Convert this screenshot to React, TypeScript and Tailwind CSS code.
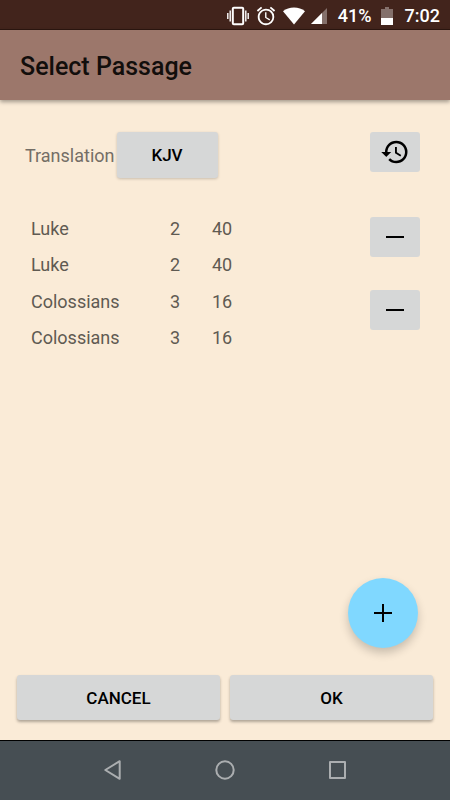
import React, { useState } from 'react';
import { MdAccessAlarm, MdHistory } from 'react-icons/md';

interface Verse {
  book: string;
  chapter: number;
  verse: number;
}

interface Passage {
  id: number;
  from: Verse;
  to: Verse;
}

const initialPassages: Passage[] = [
  { id: 1, from: { book: 'Luke', chapter: 2, verse: 40 }, to: { book: 'Luke', chapter: 2, verse: 40 } },
  { id: 2, from: { book: 'Colossians', chapter: 3, verse: 16 }, to: { book: 'Colossians', chapter: 3, verse: 16 } },
];

function PlusIcon() {
  return (
    <svg width="30" height="30" viewBox="0 0 30 30" fill="none" stroke="currentColor" strokeWidth="2">
      <path d="M6 15h18M15 6v18" />
    </svg>
  );
}

function MinusIcon() {
  return (
    <svg width="30" height="30" viewBox="0 0 30 30" fill="none" stroke="currentColor" strokeWidth="2">
      <path d="M6 15h18" />
    </svg>
  );
}

function StatusBar() {
  return (
    <div className="flex h-[30px] items-center justify-end border-b border-[#2c1610] bg-[#42241c] pt-0.5 pr-[10px] text-lg font-medium text-white">
      {/* Vibrate */}
      <svg width="22" height="20" viewBox="0 0 22 20" fill="none" stroke="currentColor">
        <rect x="5.800" y="1.800" width="10.400" height="16.400" rx="1" strokeWidth="2" />
        <path d="M3.200 4.500v11M18.800 4.500v11M.8 7v6M21.200 7v6" strokeWidth="1.400" />
      </svg>
      <MdAccessAlarm size={22} className="ml-[6px]" />
      {/* Wifi */}
      <svg className="ml-[5px]" width="24" height="18" viewBox="0 0 24 18" fill="currentColor">
        <path d="M12 17.500 1 4.300C4 1.800 7.800.6 12 .6s8 1.200 11 3.700z" />
      </svg>
      {/* Signal */}
      <svg className="ml-[5px]" width="16" height="16" viewBox="0 0 16 16" fill="currentColor">
        <path d="M16 0v16H0z" opacity=".35" />
        <path d="M11 5v11H0z" />
      </svg>
      <span className="ml-[11px]">41%</span>
      {/* Battery */}
      <svg className="ml-[9px]" width="12" height="18" viewBox="0 0 12 18" fill="currentColor">
        <path d="M4 0h4v2h4v9H0V2h4z" opacity=".35" />
        <path d="M0 11h12v7H0z" />
      </svg>
      <span className="ml-[12px]">7:02</span>
    </div>
  );
}

function NavBar() {
  return (
    <nav className="flex h-[60px] items-center justify-center gap-[82px] border-t border-black bg-[#464e53] pb-px text-[#abaeb0]">
      <button aria-label="Back">
        <svg width="30" height="30" viewBox="0 0 30 30" fill="none" stroke="currentColor" strokeWidth="2" strokeLinejoin="round">
          <path d="M21.700 6.200v17.600L7.300 15z" />
        </svg>
      </button>
      <button aria-label="Home">
        <svg width="30" height="30" viewBox="0 0 30 30" fill="none" stroke="currentColor" strokeWidth="2">
          <circle cx="15" cy="15" r="8.700" />
        </svg>
      </button>
      <button aria-label="Recent apps">
        <svg width="30" height="30" viewBox="0 0 30 30" fill="none" stroke="currentColor" strokeWidth="2" strokeLinejoin="round">
          <path d="M8 7h15v16H8z" />
        </svg>
      </button>
    </nav>
  );
}

export default function App() {
  const [passages, setPassages] = useState<Passage[]>(initialPassages);

  const addPassage = () => {
    const last = passages[passages.length - 1] ?? initialPassages[0];
    setPassages([...passages, { ...last, id: Date.now() }]);
  };

  const removePassage = (id: number) => {
    setPassages(passages.filter((p) => p.id !== id));
  };

  return (
    <div className="flex min-h-screen flex-col bg-[#faebd7] font-['Roboto',sans-serif] text-black">
      <StatusBar />

      <header className="flex h-[70px] items-center bg-[#9c776b] px-5 pt-1 shadow-[0_2px_4px_rgba(0,0,0,0.35)]">
        <h1 className="text-[25px] font-medium text-[#120e0c]">Select Passage</h1>
      </header>

      <main className="flex flex-1 flex-col pb-5">
        <div className="flex items-start justify-between pt-8 pr-[30px] pl-[25px]">
          <div className="flex items-center gap-0.5">
            <label htmlFor="translation" className="pt-0.5 text-lg text-[#746e66]">Translation</label>
            <button
              id="translation"
              className="h-[46px] w-[101px] rounded-[3px] bg-[#d6d7d7] pt-0.5 text-[17px] font-medium shadow-[0_1px_3px_rgba(0,0,0,0.2)]"
            >
              KJV
            </button>
          </div>
          <button aria-label="History" className="flex h-10 w-[50px] items-center justify-center rounded-[3px] bg-[#d6d7d7]">
            <MdHistory size={30} />
          </button>
        </div>

        {/* Each passage takes two rows: its first and its last verse */}
        <div className="mt-[33px] pr-[30px] pl-[31px]">
          <table className="w-full text-lg text-[#5f5a52]">
            {passages.map((p) => (
              <tbody key={p.id}>
                <tr className="h-9">
                  <td className="w-[139px] p-0">{p.from.book}</td>
                  <td className="w-[42px] p-0">{p.from.chapter}</td>
                  <td className="p-0">{p.from.verse}</td>
                  <td rowSpan={2} className="w-[50px] p-0 pt-[6px] align-top">
                    <button
                      aria-label={`Remove ${p.from.book}`}
                      onClick={() => removePassage(p.id)}
                      className="flex h-10 w-[50px] items-center justify-center rounded-[3px] bg-[#d6d7d7] text-black"
                    >
                      <MinusIcon />
                    </button>
                  </td>
                </tr>
                <tr className="h-[37px]">
                  <td className="p-0 pb-px">{p.to.book}</td>
                  <td className="p-0 pb-px">{p.to.chapter}</td>
                  <td className="p-0 pb-px">{p.to.verse}</td>
                </tr>
              </tbody>
            ))}
          </table>
        </div>

        <button
          aria-label="Add passage"
          onClick={addPassage}
          className="mt-auto mr-8 flex size-[70px] items-center justify-center self-end rounded-full bg-[#80d8ff] shadow-[0_5px_10px_rgba(0,0,0,0.2)]"
        >
          <PlusIcon />
        </button>

        <div className="mt-[27px] flex gap-[10px] px-[17px]">
          <button className="h-[45px] flex-1 rounded-[3px] bg-[#d6d7d7] pt-0.5 text-[17px] font-medium shadow-[0_2px_3px_rgba(0,0,0,0.3)]">
            CANCEL
          </button>
          <button className="h-[45px] flex-1 rounded-[3px] bg-[#d6d7d7] pt-0.5 text-[17px] font-medium shadow-[0_2px_3px_rgba(0,0,0,0.3)]">
            OK
          </button>
        </div>
      </main>

      <NavBar />
    </div>
  );
}
